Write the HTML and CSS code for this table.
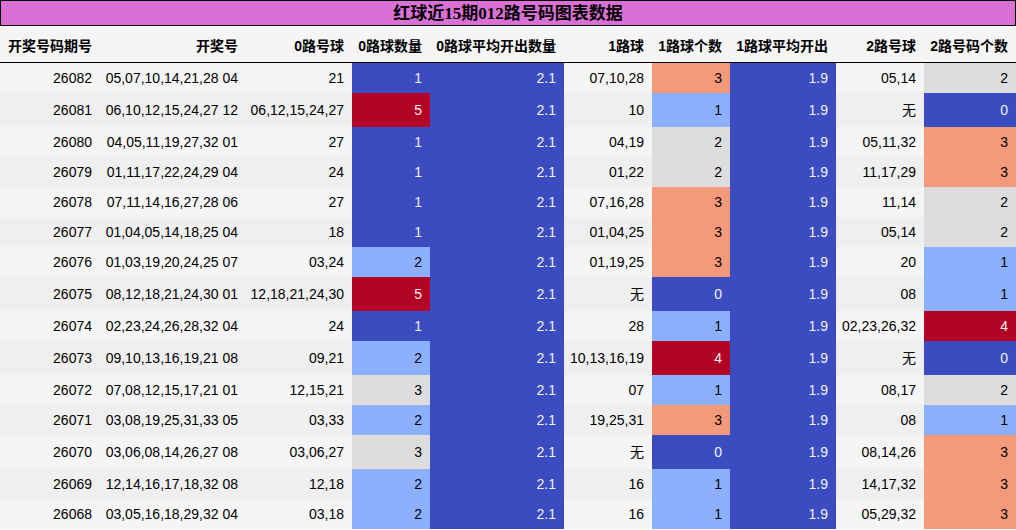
FILE: index.html
```html
<!DOCTYPE html>
<html lang="zh">
<head>
<meta charset="utf-8">
<link rel="stylesheet" href="styles.css">
</head>
<body>
<div class="title">红球近15期012路号码图表数据</div>
<table class="grid">
<colgroup>
<col class="c1"><col class="c2"><col class="c3"><col class="c4"><col class="c5"><col class="c6"><col class="c7"><col class="c8"><col class="c9"><col class="c10">
</colgroup>
<thead>
<tr><th>开奖号码期号</th><th>开奖号</th><th>0路号球</th><th>0路球数量</th><th>0路球平均开出数量</th><th>1路球</th><th>1路球个数</th><th>1路球平均开出</th><th>2路号球</th><th>2路号码个数</th></tr>
</thead>
<tbody>
<tr><td>26082</td><td>05,07,10,14,21,28 04</td><td>21</td><td class="k1">1</td><td class="k1">2.1</td><td>07,10,28</td><td class="k4">3</td><td class="k1">1.9</td><td>05,14</td><td class="k3">2</td></tr>
<tr class="tall"><td>26081</td><td>06,10,12,15,24,27 12</td><td>06,12,15,24,27</td><td class="k5">5</td><td class="k1">2.1</td><td>10</td><td class="k2">1</td><td class="k1">1.9</td><td>无</td><td class="k1">0</td></tr>
<tr><td>26080</td><td>04,05,11,19,27,32 01</td><td>27</td><td class="k1">1</td><td class="k1">2.1</td><td>04,19</td><td class="k3">2</td><td class="k1">1.9</td><td>05,11,32</td><td class="k4">3</td></tr>
<tr><td>26079</td><td>01,11,17,22,24,29 04</td><td>24</td><td class="k1">1</td><td class="k1">2.1</td><td>01,22</td><td class="k3">2</td><td class="k1">1.9</td><td>11,17,29</td><td class="k4">3</td></tr>
<tr><td>26078</td><td>07,11,14,16,27,28 06</td><td>27</td><td class="k1">1</td><td class="k1">2.1</td><td>07,16,28</td><td class="k4">3</td><td class="k1">1.9</td><td>11,14</td><td class="k3">2</td></tr>
<tr><td>26077</td><td>01,04,05,14,18,25 04</td><td>18</td><td class="k1">1</td><td class="k1">2.1</td><td>01,04,25</td><td class="k4">3</td><td class="k1">1.9</td><td>05,14</td><td class="k3">2</td></tr>
<tr><td>26076</td><td>01,03,19,20,24,25 07</td><td>03,24</td><td class="k2">2</td><td class="k1">2.1</td><td>01,19,25</td><td class="k4">3</td><td class="k1">1.9</td><td>20</td><td class="k2">1</td></tr>
<tr class="tall"><td>26075</td><td>08,12,18,21,24,30 01</td><td>12,18,21,24,30</td><td class="k5">5</td><td class="k1">2.1</td><td>无</td><td class="k1">0</td><td class="k1">1.9</td><td>08</td><td class="k2">1</td></tr>
<tr><td>26074</td><td>02,23,24,26,28,32 04</td><td>24</td><td class="k1">1</td><td class="k1">2.1</td><td>28</td><td class="k2">1</td><td class="k1">1.9</td><td>02,23,26,32</td><td class="k5">4</td></tr>
<tr class="tall"><td>26073</td><td>09,10,13,16,19,21 08</td><td>09,21</td><td class="k2">2</td><td class="k1">2.1</td><td>10,13,16,19</td><td class="k5">4</td><td class="k1">1.9</td><td>无</td><td class="k1">0</td></tr>
<tr><td>26072</td><td>07,08,12,15,17,21 01</td><td>12,15,21</td><td class="k3">3</td><td class="k1">2.1</td><td>07</td><td class="k2">1</td><td class="k1">1.9</td><td>08,17</td><td class="k3">2</td></tr>
<tr><td>26071</td><td>03,08,19,25,31,33 05</td><td>03,33</td><td class="k2">2</td><td class="k1">2.1</td><td>19,25,31</td><td class="k4">3</td><td class="k1">1.9</td><td>08</td><td class="k2">1</td></tr>
<tr class="tall"><td>26070</td><td>03,06,08,14,26,27 08</td><td>03,06,27</td><td class="k3">3</td><td class="k1">2.1</td><td>无</td><td class="k1">0</td><td class="k1">1.9</td><td>08,14,26</td><td class="k4">3</td></tr>
<tr><td>26069</td><td>12,14,16,17,18,32 08</td><td>12,18</td><td class="k2">2</td><td class="k1">2.1</td><td>16</td><td class="k2">1</td><td class="k1">1.9</td><td>14,17,32</td><td class="k4">3</td></tr>
<tr><td>26068</td><td>03,05,16,18,29,32 04</td><td>03,18</td><td class="k2">2</td><td class="k1">2.1</td><td>16</td><td class="k2">1</td><td class="k1">1.9</td><td>05,29,32</td><td class="k4">3</td></tr>
</tbody>
</table>
</body>
</html>
```
FILE: styles.css
```css
html, body {
  margin: 0;
  padding: 0;
  background: #ffffff;
}
body {
  width: 1016px;
  font-family: "Liberation Sans", "Noto Sans CJK SC", sans-serif;
  color: #000;
}
.title {
  box-sizing: border-box;
  width: 1016px;
  height: 26px;
  border: 1px solid #000;
  background: #da70d6;
  font-family: "Liberation Serif", "Noto Sans CJK SC", serif;
  font-weight: bold;
  font-size: 17px;
  line-height: 25px;
  text-align: center;
  color: #000;
}
.grid {
  width: 1016px;
  border-collapse: collapse;
  border-spacing: 0;
  table-layout: fixed;
  font-size: 14px;
}
.c1 { width: 100px; }
.c2 { width: 146px; }
.c3 { width: 106px; }
.c4 { width: 78px; }
.c5 { width: 134px; }
.c6 { width: 88px; }
.c7 { width: 78px; }
.c8 { width: 106px; }
.c9 { width: 88px; }
.c10 { width: 92px; }
.grid th {
  height: 32px;
  padding: 4px 8px 0 0;
  background: #f5f5f5;
  border-bottom: 1px solid #000;
  font-weight: bold;
  text-align: right;
  line-height: 16px;
  color: #000;
  white-space: nowrap;
  overflow: hidden;
}
.grid th:first-child {
  padding-left: 8px;
  text-align: left;
}
.grid td {
  height: 30px;
  padding: 0 8px 0 0;
  text-align: right;
  line-height: 16px;
  white-space: nowrap;
  color: #000;
  background: #f5f5f5;
}
.grid tbody tr:nth-child(even) td {
  background: #efefef;
}
.grid tr.tall td {
  height: 34px;
}
.grid tbody tr td.k1 { background: #3b4cc0; color: #f1f1f1; }
.grid tbody tr td.k2 { background: #8db0fe; color: #000; }
.grid tbody tr td.k3 { background: #dddddd; color: #000; }
.grid tbody tr td.k4 { background: #f49a7b; color: #000; }
.grid tbody tr td.k5 { background: #b40426; color: #f1f1f1; }
```
